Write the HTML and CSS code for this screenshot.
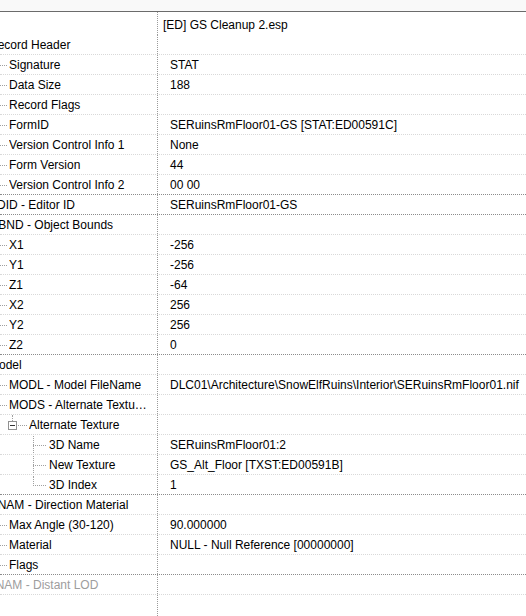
FILE: index.html
```html
<!DOCTYPE html>
<html lang="en">
<head>
    <meta charset="UTF-8">
    <meta name="viewport" content="width=device-width, initial-scale=1.0">
    <title>Record View</title>
    <link rel="stylesheet" href="styles.css">
</head>
<body>
    <div id="record-view">
        <div class="col-header"></div>
        <div class="row file-row">
            <div class="name"></div>
            <div class="value">[ED] GS Cleanup 2.esp</div>
        </div>

        <div class="row"><div class="name lv0"><span class="label">Record Header</span></div><div class="value"></div></div>
        <div class="row"><div class="name lv1"><span class="label">Signature</span></div><div class="value">STAT</div></div>
        <div class="row"><div class="name lv1"><span class="label">Data Size</span></div><div class="value">188</div></div>
        <div class="row"><div class="name lv1"><span class="label">Record Flags</span></div><div class="value"></div></div>
        <div class="row"><div class="name lv1"><span class="label">FormID</span></div><div class="value">SERuinsRmFloor01-GS [STAT:ED00591C]</div></div>
        <div class="row"><div class="name lv1"><span class="label">Version Control Info 1</span></div><div class="value">None</div></div>
        <div class="row"><div class="name lv1"><span class="label">Form Version</span></div><div class="value">44</div></div>
        <div class="row end"><div class="name lv1"><span class="label">Version Control Info 2</span></div><div class="value">00 00</div></div>

        <div class="row end"><div class="name lv0"><span class="label">EDID - Editor ID</span></div><div class="value">SERuinsRmFloor01-GS</div></div>

        <div class="row"><div class="name lv0"><span class="label">OBND - Object Bounds</span></div><div class="value"></div></div>
        <div class="row"><div class="name lv1"><span class="label">X1</span></div><div class="value">-256</div></div>
        <div class="row"><div class="name lv1"><span class="label">Y1</span></div><div class="value">-256</div></div>
        <div class="row"><div class="name lv1"><span class="label">Z1</span></div><div class="value">-64</div></div>
        <div class="row"><div class="name lv1"><span class="label">X2</span></div><div class="value">256</div></div>
        <div class="row"><div class="name lv1"><span class="label">Y2</span></div><div class="value">256</div></div>
        <div class="row end"><div class="name lv1"><span class="label">Z2</span></div><div class="value">0</div></div>

        <div class="row"><div class="name lv0"><span class="label">Model</span></div><div class="value"></div></div>
        <div class="row"><div class="name lv1"><span class="label">MODL - Model FileName</span></div><div class="value">DLC01\Architecture\SnowElfRuins\Interior\SERuinsRmFloor01.nif</div></div>
        <div class="row"><div class="name lv1"><span class="label">MODS - Alternate Textures</span></div><div class="value"></div></div>
        <div class="row"><div class="name lv2"><span class="expander"></span><span class="label">Alternate Texture</span></div><div class="value"></div></div>
        <div class="row"><div class="name lv3"><span class="label">3D Name</span></div><div class="value">SERuinsRmFloor01:2</div></div>
        <div class="row"><div class="name lv3"><span class="label">New Texture</span></div><div class="value">GS_Alt_Floor [TXST:ED00591B]</div></div>
        <div class="row end"><div class="name lv3 last"><span class="label">3D Index</span></div><div class="value">1</div></div>

        <div class="row"><div class="name lv0"><span class="label">DNAM - Direction Material</span></div><div class="value"></div></div>
        <div class="row"><div class="name lv1"><span class="label">Max Angle (30-120)</span></div><div class="value">90.000000</div></div>
        <div class="row"><div class="name lv1"><span class="label">Material</span></div><div class="value">NULL - Null Reference [00000000]</div></div>
        <div class="row end"><div class="name lv1"><span class="label">Flags</span></div><div class="value"></div></div>

        <div class="row disabled"><div class="name lv0"><span class="label">LNAM - Distant LOD</span></div><div class="value"></div></div>

        <div class="row filler"><div class="name"></div><div class="value"></div></div>
    </div>
</body>
</html>
```

FILE: styles.css
```css
html, body {
    margin: 0;
    height: 100%;
}
body {
    font-family: "Liberation Sans", Arial, sans-serif;
    font-size: 12px;
    color: #000;
    background: #fff;
    overflow: hidden;
}
#record-view {
    display: flex;
    flex-direction: column;
    height: 100%;
}
.col-header {
    height: 11px;
    background: #f9f9f9;
    border-bottom: 1px solid #6b6b6b;
}
.row {
    display: flex;
    height: 20px;
    box-sizing: border-box;
    border-bottom: 1px dotted #d9d9d9;
    line-height: 19px;
    padding-top: 1px;
    white-space: nowrap;
}
.row.end {
    border-bottom-color: #8c8c8c;
}
.file-row {
    height: 23px;
    line-height: 22px;
    padding-top: 2px;
    border-bottom: none;
}
.file-row .value {
    padding-left: 5px;
}
.filler {
    flex: 1;
    border-bottom: none;
}
.disabled {
    color: #9d9d9d;
}
.name {
    position: relative;
    width: 158px;
    flex: none;
    box-sizing: border-box;
    border-right: 1px dotted #9a9a9a;
    margin-top: -1px;
    padding-top: 1px;
    overflow: hidden;
}
.file-row .name {
    margin-top: -2px;
}
.value {
    flex: 1;
    padding-left: 12px;
    overflow: hidden;
}
.label {
    display: block;
    overflow: hidden;
    text-overflow: ellipsis;
    padding-right: 7px;
}
.lv0 .label { margin-left: -11px; }
.lv1 .label { margin-left: 9px; }
.lv2 .label { margin-left: 29px; }
.lv3 .label { margin-left: 49px; }

/* tree connectors */
.lv1::before,
.lv3::before {
    content: "";
    position: absolute;
    top: 10px;
    border-top: 1px dotted #a0a0a0;
}
.lv1::before {
    left: 0;
    width: 7px;
}
.lv3::before {
    left: 33px;
    width: 13px;
}
.lv3::after {
    content: "";
    position: absolute;
    left: 33px;
    top: 1px;
    height: 19px;
    border-left: 1px dotted #a0a0a0;
}
.lv3.last::after {
    height: 10px;
}
.lv2::before {
    content: "";
    position: absolute;
    left: 12px;
    top: 0;
    height: 6px;
    border-left: 1px dotted #a0a0a0;
}
.lv2::after {
    content: "";
    position: absolute;
    left: 18px;
    top: 10px;
    width: 9px;
    border-top: 1px dotted #a0a0a0;
}
.expander {
    position: absolute;
    left: 8px;
    top: 6px;
    width: 9px;
    height: 9px;
    box-sizing: border-box;
    border: 1px solid #919191;
    background: #fff;
}
.expander::after {
    content: "";
    position: absolute;
    left: 1px;
    top: 3px;
    width: 5px;
    height: 1px;
    background: #333;
}
```
